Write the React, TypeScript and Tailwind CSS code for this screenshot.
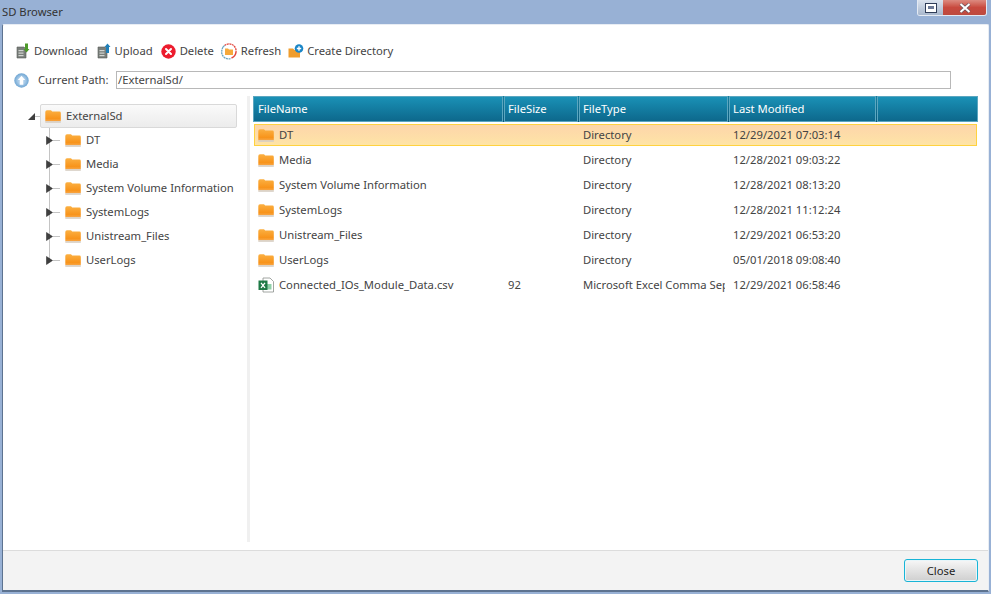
import type { ReactNode } from "react";

function Folder() {
  return (
    <svg viewBox="0 0 16 13" className="h-[13px] w-[16px] shrink-0">
      <defs>
        <linearGradient id="folder-fill" x1="0" y1="0" x2="0" y2="1">
          <stop offset="0" stopColor="#fbb042" />
          <stop offset="0.75" stopColor="#f8941b" />
          <stop offset="1" stopColor="#f7a544" />
        </linearGradient>
      </defs>
      <path d="M0.3 2 Q0.3 0.3 2 0.3 H6 L7.2 1.6 H14.4 Q15.8 1.6 15.8 3 V11.2 H0.3 Z" fill="url(#folder-fill)" />
      <rect x="0.3" y="11.2" width="15.5" height="1.6" fill="#d6cec2" />
    </svg>
  );
}

function DocIcon({ arrow, up }: { arrow: string; up?: boolean }) {
  return (
    <svg viewBox="0 0 14 16" className="h-[16px] w-[14px] shrink-0">
      <path d="M1 4 H8 L10 6 V15 H1 Z" fill="#7a7f7b" stroke="#575b58" strokeWidth="0.6" />
      <rect x="2.5" y="7" width="5" height="1.2" fill="#d2d5d2" />
      <rect x="2.5" y="9.5" width="5" height="1.2" fill="#d2d5d2" />
      <rect x="2.5" y="12" width="5" height="1.2" fill="#d2d5d2" />
      {up ? (
        <path d="M10.5 0.5 L13.5 4 H12 V10 H9 V4 H7.5 Z" fill={arrow} />
      ) : (
        <path d="M9 0.5 H12 V6 H13.5 L10.5 9.5 L7.5 6 H9 Z" fill={arrow} />
      )}
    </svg>
  );
}

function DeleteIcon() {
  return (
    <svg viewBox="0 0 15 15" className="h-[15px] w-[15px] shrink-0">
      <circle cx="7.5" cy="7.5" r="7.2" fill="#ec1c2e" />
      <path d="M5 5 L10 10 M10 5 L5 10" stroke="#fff" strokeWidth="2" strokeLinecap="round" />
    </svg>
  );
}

function RefreshIcon() {
  return (
    <svg viewBox="0 0 16 17" className="h-[17px] w-[16px] shrink-0">
      <path d="M3.5 2.6 A7 7 0 0 1 15 9" fill="none" stroke="#e2453c" strokeWidth="1.3" strokeDasharray="2 0.6" />
      <path d="M15 9 A7 7 0 0 1 10.5 15" fill="none" stroke="#e2453c" strokeWidth="1.5" />
      <path d="M9.5 15.7 A7 7 0 0 1 1.1 6.5" fill="none" stroke="#6aa6c2" strokeWidth="1.3" strokeDasharray="2 0.6" />
      <path d="M1.1 6 A7 7 0 0 1 3.5 2.6" fill="none" stroke="#6aa6c2" strokeWidth="1.3" />
      <path d="M4 5.5 H7 L8 6.5 H12 V12 H4 Z" fill="#f5a93c" />
    </svg>
  );
}

function NewFolderIcon() {
  return (
    <svg viewBox="0 0 16 14" className="h-[14px] w-[16px] shrink-0">
      <path d="M0.5 4.5 H5 L6.5 6 H12 V13.5 H0.5 Z" fill="#ef9d2e" />
      <circle cx="11" cy="4.5" r="4.3" fill="#1a86c7" />
      <path d="M8.8 4.5 H13.2 M11 2.3 V6.7" stroke="#fff" strokeWidth="1.4" />
    </svg>
  );
}

function UpIcon() {
  return (
    <svg viewBox="0 0 15 15" className="h-[15px] w-[15px] shrink-0">
      <defs>
        <radialGradient id="up-fill" cx="0.5" cy="0.5" r="0.5">
          <stop offset="0.5" stopColor="#a9cbe8" />
          <stop offset="1" stopColor="#6ea5d3" />
        </radialGradient>
      </defs>
      <circle cx="7.5" cy="7.5" r="7.2" fill="url(#up-fill)" />
      <path d="M7.5 2.8 L11.2 7 H9.3 V11.8 H5.7 V7 H3.8 Z" fill="#fff" />
    </svg>
  );
}

function ExcelIcon() {
  return (
    <svg viewBox="0 0 16 16" className="h-[16px] w-[16px] shrink-0">
      <path d="M5 1 H12 L15.5 4.5 V15 H5 Z" fill="#fff" stroke="#8a8f8c" strokeWidth="0.8" />
      <rect x="9" y="7" width="4.5" height="5.5" fill="#8fd0a8" />
      <rect x="0.5" y="3.5" width="9" height="9.5" fill="#1e7a46" />
      <path d="M3 5.8 L7 10.8 M7 5.8 L3 10.8" stroke="#fff" strokeWidth="1.3" />
    </svg>
  );
}

function ToolButton({ icon, label, className }: { icon: ReactNode; label: string; className: string }) {
  return (
    <div className={`flex items-center ${className}`}>
      {icon}
      <span>{label}</span>
    </div>
  );
}

function TreeGuide({ last }: { last?: boolean }) {
  return (
    <svg viewBox="0 0 20 24" className="h-[24px] w-[20px] shrink-0">
      <path d={last ? "M4.5 0 V12" : "M4.5 0 V24"} stroke="#c4c4c4" strokeWidth="1" fill="none" />
      <path d="M8 12.5 H15" stroke="#c4c4c4" strokeWidth="1" />
      <path d="M1.5 8.5 L7.5 12.5 L1.5 16.5 Z" fill="#3f3f3f" stroke="#222" strokeWidth="0.5" />
    </svg>
  );
}

const treeItems = ["DT", "Media", "System Volume Information", "SystemLogs", "Unistream_Files", "UserLogs"];

const rows = [
  { name: "DT", size: "", type: "Directory", date: "12/29/2021 07:03:14" },
  { name: "Media", size: "", type: "Directory", date: "12/28/2021 09:03:22" },
  { name: "System Volume Information", size: "", type: "Directory", date: "12/28/2021 08:13:20" },
  { name: "SystemLogs", size: "", type: "Directory", date: "12/28/2021 11:12:24" },
  { name: "Unistream_Files", size: "", type: "Directory", date: "12/29/2021 06:53:20" },
  { name: "UserLogs", size: "", type: "Directory", date: "05/01/2018 09:08:40" },
  { name: "Connected_IOs_Module_Data.csv", size: "92", type: "Microsoft Excel Comma Separated", date: "12/29/2021 06:58:46" },
];

const columns = [
  { label: "FileName", w: "w-[250px] pl-[4px]" },
  { label: "FileSize", w: "w-[74px] pl-[3px]" },
  { label: "FileType", w: "w-[149px] pl-[3px]" },
  { label: "Last Modified", w: "w-[147px] pl-[3px]" },
  { label: "", w: "flex-1" },
];

export default function App() {
  return (
    <div
      className="flex h-[594px] w-[991px] flex-col overflow-hidden bg-[#98b1d5] text-[11.25px] text-[#444]"
      style={{ fontFamily: '"Noto Sans", "Open Sans", sans-serif' }}
    >
      {/* title bar */}
      <div className="flex h-[24px] shrink-0 items-start justify-between pl-[2px] pr-[4px]">
        <span className="mt-[4px] leading-[16px] text-[#333]">SD Browser</span>
        <div className="flex h-[16px] w-[70px] overflow-hidden rounded-b-[3px] border border-t-0 border-[#e4eaf3]">
          <div className="flex w-[25px] items-center justify-center bg-gradient-to-b from-[#dbe3ee] to-[#a9b8cd]">
            <div className="flex h-[10px] w-[12px] items-center justify-center border-[1.5px] border-[#2f3d58] bg-white">
              <div className="h-[3px] w-[6px] bg-[#6d7a96]" />
            </div>
          </div>
          <div className="flex flex-1 items-center justify-center bg-gradient-to-b from-[#dc8a80] via-[#c8493e] to-[#bd4a3f]">
            <svg viewBox="0 0 12 10" className="h-[10px] w-[12px]">
              <path d="M1.5 1 L10.5 9 M10.5 1 L1.5 9" stroke="#6b5660" strokeWidth="3.4" />
              <path d="M1.5 1 L10.5 9 M10.5 1 L1.5 9" stroke="#fff" strokeWidth="2" />
            </svg>
          </div>
        </div>
      </div>

      {/* window body */}
      <div className="mx-[2px] mb-[2px] flex min-h-0 flex-1 flex-col rounded-t-[2px] border border-b-2 border-[#e8edf4] border-b-[#5d7390] border-l-[#5d7390] bg-white">
        <div className="flex min-h-0 flex-1 flex-col">
          {/* toolbar */}
          <div className="mt-[17px] flex h-[18px] items-center pl-[13px] leading-[18px]">
            <ToolButton className="gap-[4px]" icon={<DocIcon arrow="#4e9a2a" />} label="Download" />
            <ToolButton className="ml-[9px] gap-[4px]" icon={<DocIcon arrow="#1f7fb8" up />} label="Upload" />
            <ToolButton className="ml-[8px] gap-[4px]" icon={<DeleteIcon />} label="Delete" />
            <ToolButton className="ml-[7px] gap-[4px]" icon={<RefreshIcon />} label="Refresh" />
            <ToolButton className="ml-[7px] gap-[3px]" icon={<NewFolderIcon />} label="Create Directory" />
          </div>

          {/* current path */}
          <div className="mt-[11px] flex h-[18px] items-center pl-[11px]">
            <UpIcon />
            <span className="ml-[9px] w-[78px]">Current Path:</span>
            <div className="flex h-[18px] w-[835px] items-center border border-[#b8b8b8] pl-[1px] leading-[16px]">/ExternalSd/</div>
          </div>

          {/* tree + grid */}
          <div className="mt-[7px] flex min-h-0 flex-1">
            <div className="w-[244px] shrink-0 pl-[24px] pt-[8px]">
              <div className="flex h-[24px] items-center">
                <svg viewBox="0 0 13 24" className="h-[24px] w-[13px] shrink-0">
                  <path d="M1 16 H8 V9 Z" fill="#3f3f3f" />
                  <path d="M8 12.5 H13" stroke="#c4c4c4" strokeWidth="1" />
                </svg>
                <div className="flex h-[24px] w-[197px] items-center rounded-[2px] border border-[#d9d9d9] bg-gradient-to-b from-[#fafafa] to-[#ececec] pl-[4px]">
                  <Folder />
                  <span className="ml-[5px]">ExternalSd</span>
                </div>
              </div>
              <div className="pl-[18px]">
                {treeItems.map((item, i) => (
                  <div key={item} className="flex h-[24px] items-center">
                    <TreeGuide last={i === treeItems.length - 1} />
                    <Folder />
                    <span className="ml-[5px] whitespace-nowrap">{item}</span>
                  </div>
                ))}
              </div>
            </div>

            {/* splitter */}
            <div className="mb-[8px] w-[3px] shrink-0 bg-[#f0f0f0]" />

            <div className="ml-[3px] w-[725px] shrink-0">
              <div className="flex h-[26px] gap-[1px] bg-gradient-to-b from-[#15809f] to-[#0a5a7c] text-white">
                {columns.map((c) => (
                  <div
                    key={c.label}
                    className={`${c.w} flex items-center border border-[#5ba6c0] bg-gradient-to-b from-[#1a91b6] to-[#0d688c]`}
                  >
                    {c.label}
                  </div>
                ))}
              </div>
              <div className="mx-[1px] mt-[2px]">
                {rows.map((r, i) => (
                  <div
                    key={r.name}
                    className={`mb-[3px] flex h-[22px] items-center border pl-[3px] ${
                      i === 0
                        ? "border-[#ffd23f] bg-gradient-to-b from-[#fdd5aa] to-[#fee4a6]"
                        : "border-transparent"
                    }`}
                  >
                    <div className="flex w-[250px] items-center">
                      {r.name.endsWith(".csv") ? <ExcelIcon /> : <Folder />}
                      <span className="ml-[5px] whitespace-nowrap">{r.name}</span>
                    </div>
                    <div className="w-[75px]">{r.size}</div>
                    <div className="mr-[8px] w-[142px] overflow-hidden whitespace-nowrap">{r.type}</div>
                    <div className="w-[149px] whitespace-nowrap">{r.date}</div>
                  </div>
                ))}
              </div>
            </div>
          </div>
        </div>

        {/* footer */}
        <div className="flex h-[40px] shrink-0 items-center justify-end border-t border-[#dcdcdc] bg-[#f3f3f3] pr-[10px]">
          <button
            type="button"
            className="h-[23px] w-[74px] rounded-[3px] border border-[#18b4d6] bg-gradient-to-b from-[#f7f7f7] to-[#cfcfcf] leading-[18px] text-[#222] shadow-[inset_0_0_0_1px_#e8f6fa]"
          >
            Close
          </button>
        </div>
      </div>
    </div>
  );
}
